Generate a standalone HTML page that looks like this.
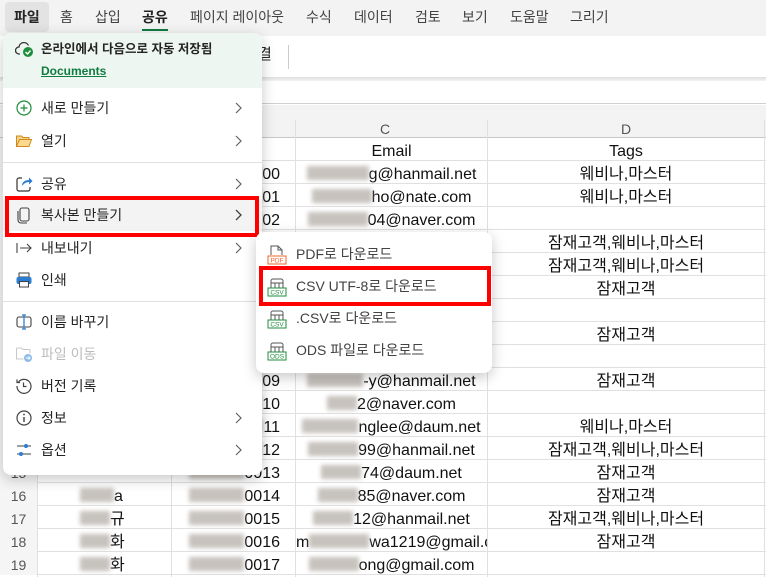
<!DOCTYPE html>
<html><head><meta charset="utf-8">
<style>
*{box-sizing:border-box;margin:0;padding:0}
body{width:766px;height:577px;overflow:hidden;position:relative;background:#fff;font-family:"Liberation Sans","Noto Sans CJK KR",sans-serif;color:#242424}
.abs{position:absolute}
.tab{position:absolute;top:7px;font-size:14px;color:#424242;line-height:20px}
.grid{position:absolute;left:0;top:138px;width:766px}
.row{position:absolute;left:0;width:766px;height:23px;border-bottom:1px solid #e0e0e0;font-size:16px;line-height:27px;color:#111}
.rn{position:absolute;left:0;width:37px;height:23px;background:#f5f5f5;text-align:center;color:#555;font-size:14px;line-height:26px}
.vl{position:absolute;top:104px;bottom:0;width:1px;background:#e0e0e0}
.cB{position:absolute;left:172px;width:122px;text-align:right;padding-right:14px}
.cC{position:absolute;left:296px;width:191px;text-align:center;white-space:nowrap;overflow:hidden}
.cD{position:absolute;left:488px;width:276px;text-align:center}
.bl{display:inline-block;height:14px;background:#b9b3ad;filter:blur(2px);vertical-align:-1px;opacity:.8}
.menu{position:absolute;left:3px;top:33px;width:259px;height:442px;background:#fff;border-radius:8px;box-shadow:0 4px 14px rgba(0,0,0,.22);overflow:hidden}
.mi{position:absolute;left:0;width:259px;height:32px;font-size:14px;line-height:32px;color:#242424}
.mi .t{position:absolute;left:38px}
.mi .ic{position:absolute;left:12px;top:7px;width:18px;height:18px}
.mi .ch{position:absolute;left:230px;top:9px}
.div{position:absolute;left:0;width:259px;height:1px;background:#e0e0e0}
.sub{position:absolute;left:256px;top:232px;width:236px;height:141px;background:#fff;border-radius:8px;box-shadow:0 4px 14px rgba(0,0,0,.22)}
.si{position:absolute;left:0;width:236px;height:32px;font-size:14px;line-height:32px;color:#424242}
.si .t{position:absolute;left:40px}
.si svg{position:absolute;left:11px;top:6px}
</style></head><body>
<div class="abs" style="left:0;top:0;width:766px;height:36px;background:#f3f3f3"></div>
<div class="abs" style="left:5px;top:2px;width:44px;height:30px;background:#e3e3e3;border-radius:4px"></div>
<div class="tab" style="left:14px;font-weight:bold;color:#242424">파일</div>
<div class="tab" style="left:60px">홈</div>
<div class="tab" style="left:95px">삽입</div>
<div class="tab" style="left:142px;font-weight:bold;color:#242424">공유</div>
<div class="abs" style="left:142px;top:29px;width:26px;height:2px;background:#107c41"></div>
<div class="tab" style="left:190px">페이지 레이아웃</div>
<div class="tab" style="left:306px">수식</div>
<div class="tab" style="left:354px">데이터</div>
<div class="tab" style="left:415px">검토</div>
<div class="tab" style="left:462px">보기</div>
<div class="tab" style="left:510px">도움말</div>
<div class="tab" style="left:570px">그리기</div>
<div class="abs" style="left:0;top:36px;width:766px;height:42px;background:#fff"></div>
<div class="abs" style="left:258px;top:44px;font-size:15px;line-height:22px">결</div>
<div class="abs" style="left:288px;top:45px;width:1px;height:24px;background:#ccc"></div>
<div class="abs" style="left:0;top:77px;width:766px;height:4px;background:linear-gradient(#ddd,#f3f3f3)"></div>
<div class="abs" style="left:0;top:81px;width:766px;height:23px;background:#fff;border-bottom:1px solid #d0d0d0"></div>
<div class="abs" style="left:0;top:105px;width:766px;height:33px;background:#f3f3f3;border-bottom:1px solid #c8c8c8"></div>
<div class="abs" style="left:380px;top:121px;font-size:14px;color:#555">C</div>
<div class="abs" style="left:621px;top:121px;font-size:14px;color:#555">D</div>
<div class="vl" style="left:37px;top:120px"></div>
<div class="vl" style="left:171px;top:120px"></div>
<div class="vl" style="left:295px;top:120px"></div>
<div class="vl" style="left:487px;top:120px"></div>
<div class="vl" style="left:764px;top:120px"></div>
<div class="grid">
<div class="row" style="top:0"><div class="rn">1</div><div class="cC">Email</div><div class="cD">Tags</div></div>
<div class="row" style="top:23px"><div class="rn">2</div><div class="cB"><span class="bl" style="width:70px"></span>00</div><div class="cC"><span class="bl" style="width:62px"></span>g@hanmail.net</div><div class="cD">웨비나,마스터</div></div>
<div class="row" style="top:46px"><div class="rn">3</div><div class="cB"><span class="bl" style="width:70px"></span>01</div><div class="cC"><span class="bl" style="width:60px"></span>ho@nate.com</div><div class="cD">웨비나,마스터</div></div>
<div class="row" style="top:69px"><div class="rn">4</div><div class="cB"><span class="bl" style="width:70px"></span>02</div><div class="cC"><span class="bl" style="width:60px"></span>04@naver.com</div><div class="cD"></div></div>
<div class="row" style="top:92px"><div class="rn">5</div><div class="cD">잠재고객,웨비나,마스터</div></div>
<div class="row" style="top:115px"><div class="rn">6</div><div class="cD">잠재고객,웨비나,마스터</div></div>
<div class="row" style="top:138px"><div class="rn">7</div><div class="cD">잠재고객</div></div>
<div class="row" style="top:161px"><div class="rn">8</div></div>
<div class="row" style="top:184px"><div class="rn">9</div><div class="cD">잠재고객</div></div>
<div class="row" style="top:207px"><div class="rn">10</div></div>
<div class="row" style="top:230px"><div class="rn">11</div><div class="cB"><span class="bl" style="width:70px"></span>09</div><div class="cC"><span class="bl" style="width:56px"></span>-y@hanmail.net</div><div class="cD">잠재고객</div></div>
<div class="row" style="top:253px"><div class="rn">12</div><div class="cB"><span class="bl" style="width:70px"></span>10</div><div class="cC"><span class="bl" style="width:30px"></span>2@naver.com</div></div>
<div class="row" style="top:276px"><div class="rn">13</div><div class="cB"><span class="bl" style="width:70px"></span>11</div><div class="cC"><span class="bl" style="width:56px"></span>nglee@daum.net</div><div class="cD">웨비나,마스터</div></div>
<div class="row" style="top:299px"><div class="rn">14</div><div class="cB"><span class="bl" style="width:70px"></span>12</div><div class="cC"><span class="bl" style="width:50px"></span>99@hanmail.net</div><div class="cD">잠재고객,웨비나,마스터</div></div>
<div class="row" style="top:322px"><div class="rn">15</div><div class="cB"><span class="bl" style="width:55px"></span>0013</div><div class="cC"><span class="bl" style="width:40px"></span>74@daum.net</div><div class="cD">잠재고객</div></div>
<div class="row" style="top:345px"><div class="rn">16</div><div style="position:absolute;left:80px"><span class="bl" style="width:34px"></span>a</div><div class="cB"><span class="bl" style="width:55px"></span>0014</div><div class="cC"><span class="bl" style="width:40px"></span>85@naver.com</div><div class="cD">잠재고객</div></div>
<div class="row" style="top:368px"><div class="rn">17</div><div style="position:absolute;left:80px"><span class="bl" style="width:30px"></span>규</div><div class="cB"><span class="bl" style="width:55px"></span>0015</div><div class="cC"><span class="bl" style="width:40px"></span>12@hanmail.net</div><div class="cD">잠재고객,웨비나,마스터</div></div>
<div class="row" style="top:391px"><div class="rn">18</div><div style="position:absolute;left:80px"><span class="bl" style="width:30px"></span>화</div><div class="cB"><span class="bl" style="width:55px"></span>0016</div><div class="cC" style="text-align:left">m<span class="bl" style="width:60px"></span>wa1219@gmail.co</div><div class="cD">잠재고객</div></div>
<div class="row" style="top:414px"><div class="rn">19</div><div style="position:absolute;left:80px"><span class="bl" style="width:30px"></span>화</div><div class="cB"><span class="bl" style="width:55px"></span>0017</div><div class="cC"><span class="bl" style="width:50px"></span>ong@gmail.com</div></div>
</div>

<div class="menu">
<div class="abs" style="left:0;top:0;width:259px;height:55px;background:#eef6f1"></div>
<svg class="abs" style="left:12px;top:8px" width="20" height="18" viewBox="0 0 20 18"><path d="M5 13H4a3.5 3.5 0 0 1 0-7 5 5 0 0 1 9.5-1.5" fill="none" stroke="#333" stroke-width="1.3"/><circle cx="13" cy="11" r="5" fill="#1e8e3e"/><path d="M10.5 11l2 2 3-3.5" fill="none" stroke="#fff" stroke-width="1.4"/></svg>
<div class="abs" style="left:38px;top:7px;font-size:12.5px;font-weight:bold;line-height:18px">온라인에서 다음으로 자동 저장됨</div>
<div class="abs" style="left:38px;top:29px;font-size:12px;font-weight:bold;color:#107c41;text-decoration:underline;line-height:18px">Documents</div>

<div class="mi" style="top:59px"><svg class="ic" viewBox="0 0 18 18"><circle cx="9" cy="9" r="7" fill="none" stroke="#1e8e3e" stroke-width="1.2"/><path d="M9 5.5v7M5.5 9h7" stroke="#1e8e3e" stroke-width="1.2"/></svg><span class="t">새로 만들기</span><svg class="ch" width="10" height="14"><path d="M3 2l5 5-5 5" fill="none" stroke="#616161" stroke-width="1.2"/></svg></div>
<div class="mi" style="top:92px"><svg class="ic" viewBox="0 0 18 18"><path d="M1.5 4h5l1.5 1.5h6v2H5L2.5 14h-1z" fill="#f8d38a" stroke="#d08a1e"/><path d="M4.5 7.5h12l-2.5 7H1.5z" fill="#fbd98f" stroke="#d08a1e"/></svg><span class="t">열기</span><svg class="ch" width="10" height="14"><path d="M3 2l5 5-5 5" fill="none" stroke="#616161" stroke-width="1.2"/></svg></div>
<div class="div" style="top:129px"></div>
<div class="mi" style="top:135px"><svg class="ic" viewBox="0 0 18 18"><path d="M7 3H4a2 2 0 0 0-2 2v9a2 2 0 0 0 2 2h9a2 2 0 0 0 2-2v-2" fill="none" stroke="#333" stroke-width="1.2"/><path d="M7 11c0-4 3-6 7-6V2.5L17.5 6 14 9.5V7c-3 0-5 1.5-7 4z" fill="#2b7cd3"/></svg><span class="t">공유</span><svg class="ch" width="10" height="14"><path d="M3 2l5 5-5 5" fill="none" stroke="#616161" stroke-width="1.2"/></svg></div>
<div class="mi" style="top:166px;background:#f3f3f3"><svg class="ic" viewBox="0 0 18 18"><rect x="5" y="2" width="9" height="13" rx="2" fill="none" stroke="#424242" stroke-width="1.1"/><path d="M3 5v9a3 3 0 0 0 3 3h6" fill="none" stroke="#424242" stroke-width="1.1"/></svg><span class="t">복사본 만들기</span><svg class="ch" width="10" height="14"><path d="M3 2l5 5-5 5" fill="none" stroke="#424242" stroke-width="1.3"/></svg></div>
<div class="abs" style="left:2px;top:163px;width:254px;height:41px;border:4px solid #f00"></div>
<div class="mi" style="top:199px"><svg class="ic" viewBox="0 0 18 18"><path d="M2 4v10M5 9h11M12 5l4 4-4 4" fill="none" stroke="#424242" stroke-width="1.1"/></svg><span class="t">내보내기</span><svg class="ch" width="10" height="14"><path d="M3 2l5 5-5 5" fill="none" stroke="#616161" stroke-width="1.2"/></svg></div>
<div class="mi" style="top:231px"><svg class="ic" viewBox="0 0 18 18"><rect x="4" y="2" width="10" height="4" fill="#fff" stroke="#424242"/><rect x="1.5" y="6" width="15" height="7" rx="2" fill="#2b7cd3"/><rect x="4.5" y="10.5" width="9" height="5.5" fill="#fff" stroke="#424242"/></svg><span class="t">인쇄</span></div>
<div class="div" style="top:268px"></div>
<div class="mi" style="top:273px"><svg class="ic" viewBox="0 0 18 18"><rect x="2" y="4" width="14" height="10" rx="2" fill="none" stroke="#424242" stroke-width="1.1"/><path d="M9 2v14M7 2h4M7 16h4" stroke="#2b7cd3" stroke-width="1.3"/></svg><span class="t">이름 바꾸기</span></div>
<div class="mi" style="top:305px;color:#bdbdbd"><svg class="ic" viewBox="0 0 18 18"><path d="M1.5 3h5l1.5 1.5h7v4M1.5 3v11h7" fill="none" stroke="#c8c8c8"/><circle cx="13" cy="13" r="4" fill="#8fbce8"/><path d="M11 13h4M13.5 11.5L15 13l-1.5 1.5" stroke="#fff" fill="none"/></svg><span class="t">파일 이동</span></div>
<div class="mi" style="top:337px"><svg class="ic" viewBox="0 0 18 18"><path d="M3.5 5A7 7 0 1 1 2 9" fill="none" stroke="#424242" stroke-width="1.2"/><path d="M2 2.5v3h3" fill="none" stroke="#424242" stroke-width="1.2"/><path d="M8.5 5.5v4h3" fill="none" stroke="#424242" stroke-width="1.2"/></svg><span class="t">버전 기록</span></div>
<div class="mi" style="top:369px"><svg class="ic" viewBox="0 0 18 18"><circle cx="9" cy="9" r="7" fill="none" stroke="#424242" stroke-width="1.2"/><path d="M9 8v5" stroke="#424242" stroke-width="1.4"/><circle cx="9" cy="5.5" r=".9" fill="#424242"/></svg><span class="t">정보</span><svg class="ch" width="10" height="14"><path d="M3 2l5 5-5 5" fill="none" stroke="#616161" stroke-width="1.2"/></svg></div>
<div class="mi" style="top:401px"><svg class="ic" viewBox="0 0 18 18"><path d="M2 5h14M2 13h14" stroke="#424242" stroke-width="1.1"/><circle cx="11" cy="5" r="2" fill="#2b7cd3"/><circle cx="6" cy="13" r="2" fill="#2b7cd3"/></svg><span class="t">옵션</span><svg class="ch" width="10" height="14"><path d="M3 2l5 5-5 5" fill="none" stroke="#616161" stroke-width="1.2"/></svg></div>
</div>

<div class="sub">
<div class="si" style="top:6px"><svg width="20" height="22" viewBox="0 0 20 22"><path d="M4 11V2h7l4 4v5" fill="none" stroke="#555"/><path d="M11 2v4h4" fill="none" stroke="#555"/><rect x="1" y="12" width="18" height="8" fill="#fff" stroke="#f0642a"/><text x="10" y="18.5" font-size="6.5" text-anchor="middle" fill="#f0642a" font-family="Liberation Sans">PDF</text></svg><span class="t">PDF로 다운로드</span></div>
<div class="si" style="top:38px"><svg width="20" height="22" viewBox="0 0 20 22"><path d="M4 12V5a2 2 0 0 1 2-2h8a2 2 0 0 1 2 2v7M4 7h12M8 7v5M12 7v5" fill="none" stroke="#555"/><rect x="1" y="12" width="18" height="8" fill="#fff" stroke="#1e8e3e"/><text x="10" y="18.5" font-size="6.5" text-anchor="middle" fill="#1e8e3e" font-family="Liberation Sans">CSV</text></svg><span class="t">CSV UTF-8로 다운로드</span></div>
<div class="si" style="top:70px"><svg width="20" height="22" viewBox="0 0 20 22"><path d="M4 12V5a2 2 0 0 1 2-2h8a2 2 0 0 1 2 2v7M4 7h12M8 7v5M12 7v5" fill="none" stroke="#555"/><rect x="1" y="12" width="18" height="8" fill="#fff" stroke="#1e8e3e"/><text x="10" y="18.5" font-size="6.5" text-anchor="middle" fill="#1e8e3e" font-family="Liberation Sans">CSV</text></svg><span class="t">.CSV로 다운로드</span></div>
<div class="si" style="top:102px"><svg width="20" height="22" viewBox="0 0 20 22"><path d="M4 12V5a2 2 0 0 1 2-2h8a2 2 0 0 1 2 2v7M4 7h12M8 7v5M12 7v5" fill="none" stroke="#555"/><rect x="1" y="12" width="18" height="8" fill="#fff" stroke="#1e8e3e"/><text x="10" y="18.5" font-size="6.5" text-anchor="middle" fill="#1e8e3e" font-family="Liberation Sans">ODS</text></svg><span class="t">ODS 파일로 다운로드</span></div>
</div>
<div class="abs" style="left:259px;top:266px;width:232px;height:40px;border:4px solid #f00"></div>
</body></html>
